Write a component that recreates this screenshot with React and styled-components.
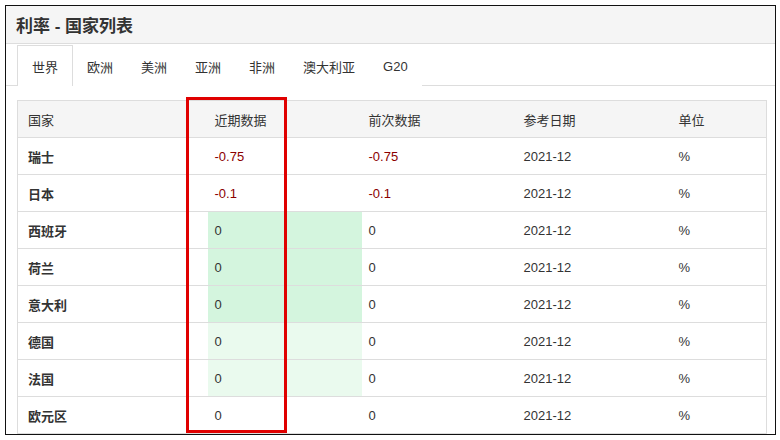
import React from "react";
import styled, { createGlobalStyle } from "styled-components";

const Global = createGlobalStyle`
  body { margin: 0; background: #fff; font-family: Arial, "Liberation Sans", "Noto Sans CJK SC", sans-serif; }
`;
const Frame = styled.div`
  position: relative; margin: 5px 0 0 5px; width: 769px; height: 428px;
  border: 1.5px solid #111; overflow: hidden; background: #fff;
`;
const Header = styled.div`
  height: 37px; background: #f5f5f5; border-bottom: 1px solid #ddd;
  display: flex; align-items: center; padding-left: 10px;
  font-size: 17px; font-weight: bold; color: #333;
`;
const Tabs = styled.div`
  display: flex; height: 41px; border-bottom: 1px solid #ddd; padding-left: 11px; align-items: flex-end;
`;
const Tab = styled.div`
  height: ${p => (p.$active ? "41px" : "40px")}; padding: 0 ${p => (p.$active ? "14px" : "13px")};
  display: flex; align-items: center; font-size: 13px; color: #333;
  background: #fff; margin-bottom: -1px;
  border: 1px solid ${p => (p.$active ? "#ddd" : "transparent")}; border-bottom: none; box-sizing: border-box;
`;
const Body = styled.div` padding: 14px 0 0 11px; `;
const Table = styled.table`
  border-collapse: collapse; width: 750px; table-layout: fixed; font-size: 13px; color: #333;
  border-left: 1px solid #ddd; border-right: 1px solid #ddd;
`;
const Th = styled.th`
  background: #f5f5f5; font-weight: normal; text-align: left; height: 36px; padding: 0 0 0 ${p => p.$pl || 7}px;
  border-top: 1px solid #ddd; border-bottom: 1px solid #ddd;
`;
const Td = styled.td`
  height: 36px; padding: 0 0 0 ${p => p.$pl || 7}px; border-bottom: 1px solid #ddd;
  font-weight: ${p => (p.$bold ? "bold" : "normal")};
  color: ${p => (p.$neg ? "#8b0000" : "#333")};
  background: ${p => p.$bg || "transparent"};
`;
const RedBox = styled.div`
  position: absolute; left: 180px; top: 91px; width: 95px; height: 330px;
  border: 3px solid #e00000;
`;

const rows = [
  ["瑞士", "-0.75", "-0.75", null],
  ["日本", "-0.1", "-0.1", null],
  ["西班牙", "0", "0", "#d4f5de"],
  ["荷兰", "0", "0", "#d4f5de"],
  ["意大利", "0", "0", "#d4f5de"],
  ["德国", "0", "0", "#eafaee"],
  ["法国", "0", "0", "#eafaee"],
  ["欧元区", "0", "0", null],
];

export default function App() {
  return (
    <>
      <Global />
      <Frame>
        <Header>利率 - 国家列表</Header>
        <Tabs>
          {["世界", "欧洲", "美洲", "亚洲", "非洲", "澳大利亚", "G20"].map((t, i) => (
            <Tab key={t} $active={i === 0}>{t}</Tab>
          ))}
        </Tabs>
        <Body>
          <Table>
            <colgroup>
              <col style={{ width: 190 }} /><col style={{ width: 154 }} /><col style={{ width: 155 }} />
              <col style={{ width: 155 }} /><col />
            </colgroup>
            <thead>
              <tr><Th $pl={10}>国家</Th><Th>近期数据</Th><Th>前次数据</Th><Th>参考日期</Th><Th>单位</Th></tr>
            </thead>
            <tbody>
              {rows.map(r => (
                <tr key={r[0]}>
                  <Td $pl={10} $bold>{r[0]}</Td>
                  <Td $neg={r[1].startsWith("-")} $bg={r[3]}>{r[1]}</Td>
                  <Td $neg={r[2].startsWith("-")}>{r[2]}</Td>
                  <Td>2021-12</Td>
                  <Td>%</Td>
                </tr>
              ))}
            </tbody>
          </Table>
        </Body>
        <RedBox />
      </Frame>
    </>
  );
}
